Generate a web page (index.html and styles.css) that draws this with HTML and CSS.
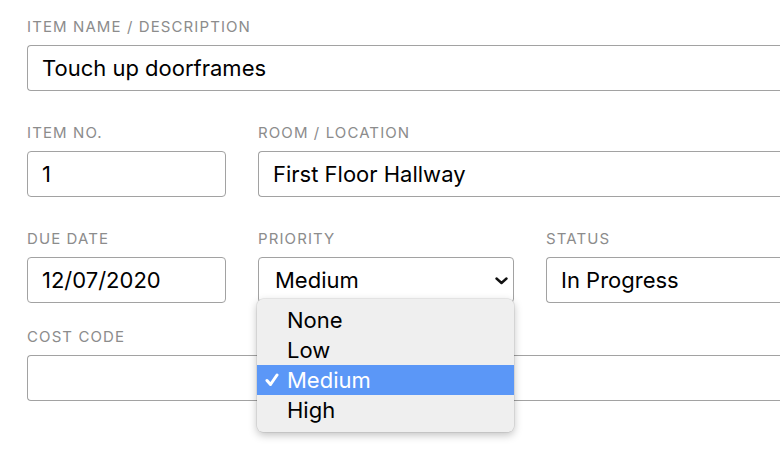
FILE: index.html
```html
<!DOCTYPE html>
<html>
<head>
<meta charset="utf-8">
<link rel="stylesheet" href="styles.css">
</head>
<body>
<form class="form">
  <div class="row row-1">
    <div class="field grow">
      <label class="label">Item Name / Description</label>
      <div class="input">Touch up doorframes</div>
    </div>
  </div>
  <div class="row row-2">
    <div class="field col-a">
      <label class="label">Item No.</label>
      <div class="input">1</div>
    </div>
    <div class="field grow">
      <label class="label">Room / Location</label>
      <div class="input">First Floor Hallway</div>
    </div>
  </div>
  <div class="row row-3">
    <div class="field col-a">
      <label class="label">Due Date</label>
      <div class="input">12/07/2020</div>
    </div>
    <div class="field col-b">
      <label class="label">Priority</label>
      <div class="select-wrap">
        <div class="input select">
          <span>Medium</span>
          <svg class="chevron" width="13" height="8" viewBox="0 0 13 8"><path d="M1.5 1.5 L6.5 6 L11.5 1.5" fill="none" stroke="#111" stroke-width="2.4" stroke-linecap="round" stroke-linejoin="round"/></svg>
        </div>
        <ul class="menu">
          <li class="opt"><span class="check"></span>None</li>
          <li class="opt"><span class="check"></span>Low</li>
          <li class="opt selected"><span class="check"><svg width="14" height="14" viewBox="0 0 14 14"><path d="M2 7.5 L5.5 11.5 L12 2" fill="none" stroke="#fff" stroke-width="3" stroke-linecap="round" stroke-linejoin="round"/></svg></span>Medium</li>
          <li class="opt"><span class="check"></span>High</li>
        </ul>
      </div>
    </div>
    <div class="field grow">
      <label class="label">Status</label>
      <div class="input">In Progress</div>
    </div>
  </div>
  <div class="row row-4">
    <div class="field grow">
      <label class="label">Cost Code</label>
      <div class="input"></div>
    </div>
  </div>
</form>
</body>
</html>
```
FILE: styles.css
```css
html {
  overflow: hidden;
}
html, body {
  margin: 0;
  padding: 0;
  background: #ffffff;
}
body {
  font-family: Inter, "Noto Sans", "Liberation Sans", sans-serif;
  color: #000;
  min-height: 456px;
}
.form {
  width: 753px;
  padding: 18px 0 0 27px;
}
.row {
  display: flex;
  gap: 32px;
}
.row-1, .row-2 {
  margin-bottom: 33px;
}
.row-3 {
  margin-bottom: 25px;
}
.field {
  display: flex;
  flex-direction: column;
}
.grow { flex: 1; }
.col-a { width: 199px; flex: none; }
.col-b { width: 256px; flex: none; }
.label {
  display: block;
  font-size: 15px;
  line-height: 18px;
  height: 18px;
  margin-bottom: 9px;
  text-transform: uppercase;
  color: #8c8c8c;
  letter-spacing: 1.1px;
  white-space: nowrap;
}
.input {
  box-sizing: border-box;
  height: 46px;
  border: 1px solid #a2a2a2;
  border-radius: 4px;
  padding: 0 14px;
  font-size: 22px;
  line-height: 44px;
  color: #000;
  background: #fff;
  white-space: nowrap;
}
.grow .input {
  border-right: none;
  border-top-right-radius: 0;
  border-bottom-right-radius: 0;
}
.select-wrap {
  position: relative;
}
.select {
  display: flex;
  align-items: center;
  justify-content: space-between;
  padding: 0 5px 0 16px;
  width: 256px;
}
.chevron { display: block; margin-top: 1px; }
.menu {
  position: absolute;
  left: -1px;
  top: 42px;
  width: 257px;
  margin: 0;
  padding: 6px 0 7px;
  list-style: none;
  background: #efefef;
  border-radius: 6px;
  box-shadow: 0 3px 8px rgba(0,0,0,0.25), 0 0 0 0.5px rgba(0,0,0,0.12);
  z-index: 2;
}
.opt {
  display: flex;
  align-items: center;
  height: 30px;
  font-size: 22px;
  line-height: 30px;
  color: #000;
}
.check {
  width: 30px;
  padding-left: 8px;
  box-sizing: border-box;
  flex: none;
  display: flex;
  align-items: center;
}
.opt.selected {
  background: #5b97f7;
  color: #fff;
}
```
